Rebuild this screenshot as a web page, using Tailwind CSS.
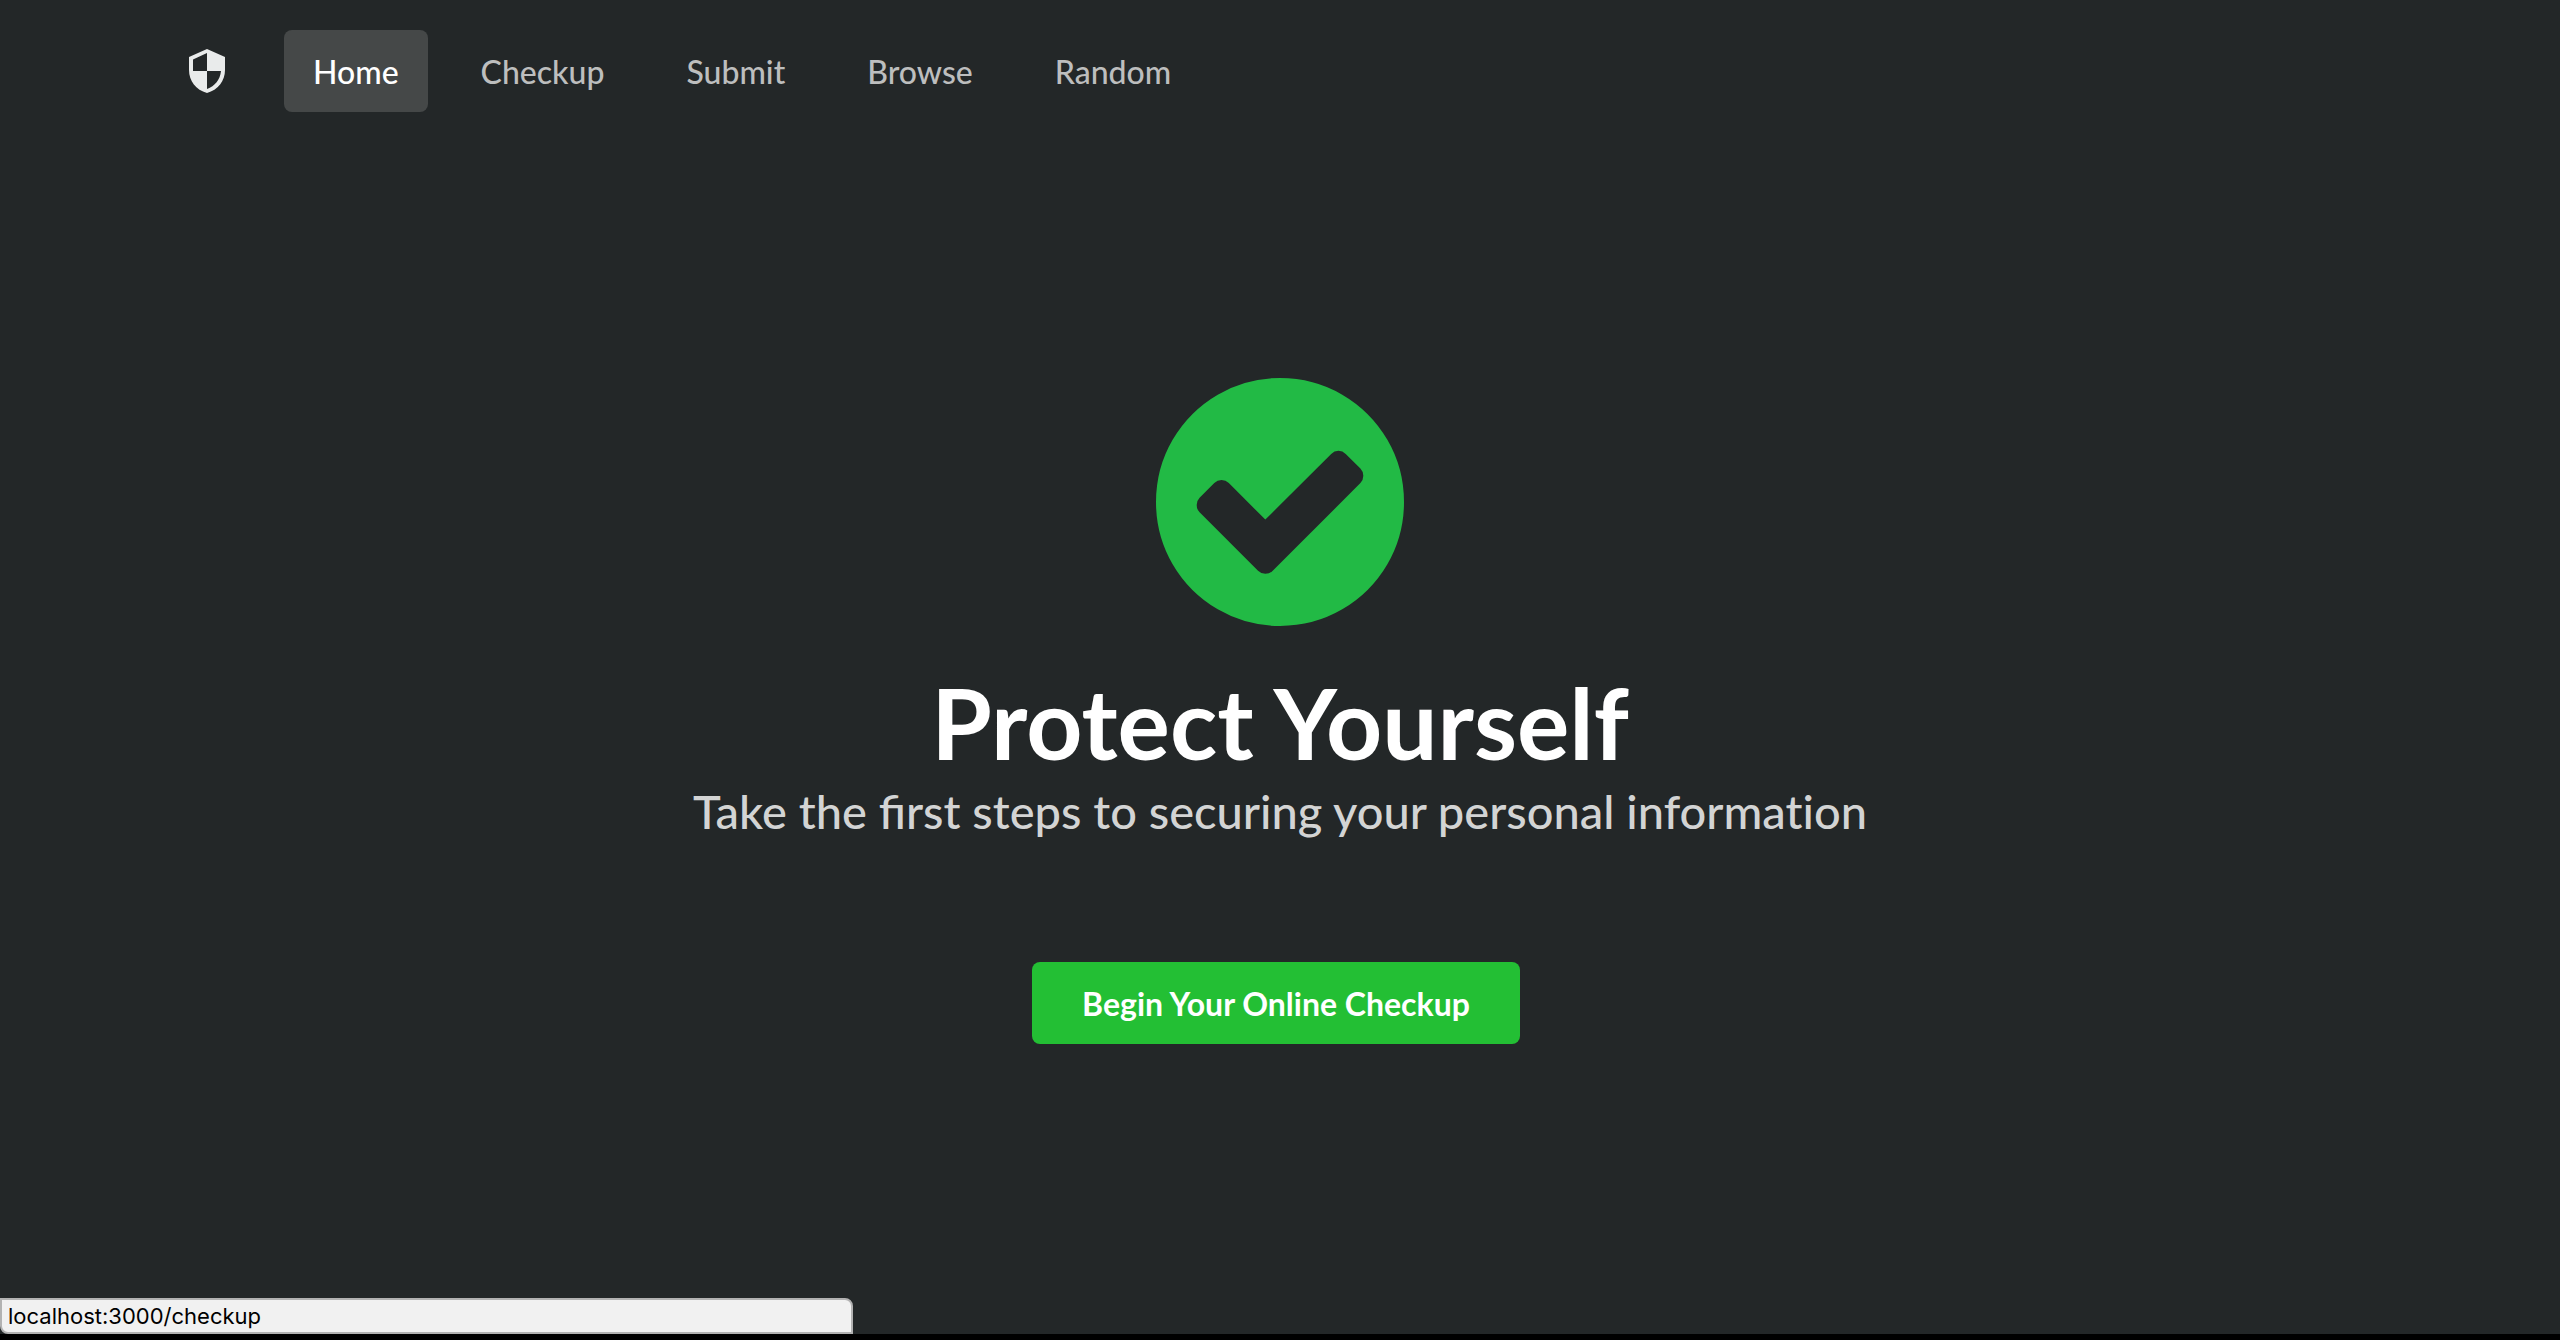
<!DOCTYPE html>
<html lang="en">
<head>
    <meta charset="UTF-8">
    <meta name="viewport" content="width=device-width, initial-scale=1.0">
    <title>Protect Yourself</title>
    <script src="https://cdn.jsdelivr.net/npm/@tailwindcss/browser@4"></script>
</head>
<body class="bg-[#232728] font-['Lato',sans-serif]">
    <div class="flex flex-col min-h-screen border-b-6 border-black">
        <!-- Top Menu -->
        <nav class="flex items-center px-40 pt-[30px] text-[32px] leading-[34px] font-medium text-[#bdbebe]">
            <a href="#" aria-label="Security" class="px-7 mr-[30px]">
                <svg class="w-[38px] h-11" viewBox="0 0 38 44" aria-hidden="true">
                    <path fill="#e9ebeb" fill-rule="evenodd" d="M19 0L37 8V21C37 32 30 41 19 44C8 41 1 32 1 21V8ZM19 4L5 10.500V22H19ZM19 22V40C27 37 32 31 33 22Z"/>
                </svg>
            </a>
            <div class="flex gap-6">
                <a href="#" class="px-[29px] pt-[25px] pb-[23px] rounded-lg bg-[#454848] text-white">Home</a>
                <a href="#checkup" class="px-[29px] pt-[25px] pb-[23px] rounded-lg">Checkup</a>
                <a href="#submit" class="px-[29px] pt-[25px] pb-[23px] rounded-lg">Submit</a>
                <a href="#browse" class="px-[29px] pt-[25px] pb-[23px] rounded-lg">Browse</a>
                <a href="#random" class="px-[29px] pt-[25px] pb-[23px] rounded-lg">Random</a>
            </div>
        </nav>

        <!-- Hero -->
        <main class="flex-1 flex flex-col items-center pt-[266px] text-center">
            <svg class="w-[248px] h-[248px]" viewBox="128 128 1536 1536" aria-hidden="true">
                <path fill="#22ba45" d="M1412 734q0-28-18-46l-91-90q-19-19-45-19t-45 19l-408 407-226-226q-19-19-45-19t-45 19l-91 90q-18 18-18 46 0 27 18 45l362 362q19 19 45 19 27 0 46-19l543-543q18-18 18-45zm252 162q0 209-103 385.500t-279.500 279.500-385.500 103-385.500-103-279.500-279.500-103-385.500 103-385.500 279.500-279.500 385.500-103 385.500 103 279.500 279.500 103 385.500z"/>
            </svg>
            <h1 class="mt-9 text-[98px] leading-[120px] font-bold text-white">Protect Yourself</h1>
            <h2 class="text-[47px] leading-[58px] font-medium text-[#d3d4d4]">Take the first steps to securing your personal <span class="[font-variant-ligatures:none]">information</span></h2>
            <button type="button" class="mt-[122px] mr-2 px-[50px] pt-[25px] pb-[23px] rounded-lg bg-[#23bf34] text-[32px] leading-[34px] font-bold text-white">Begin Your Online Checkup</button>
        </main>

        <!-- Link status -->
        <div class="w-1/3 h-9 px-1.5 border-2 border-[#b2b2b2] rounded-tr-lg rounded-bl-lg bg-[#f1f1f1] font-['Inter',sans-serif] text-[22px] leading-8 text-black">localhost:3000/checkup</div>
    </div>
</body>
</html>
